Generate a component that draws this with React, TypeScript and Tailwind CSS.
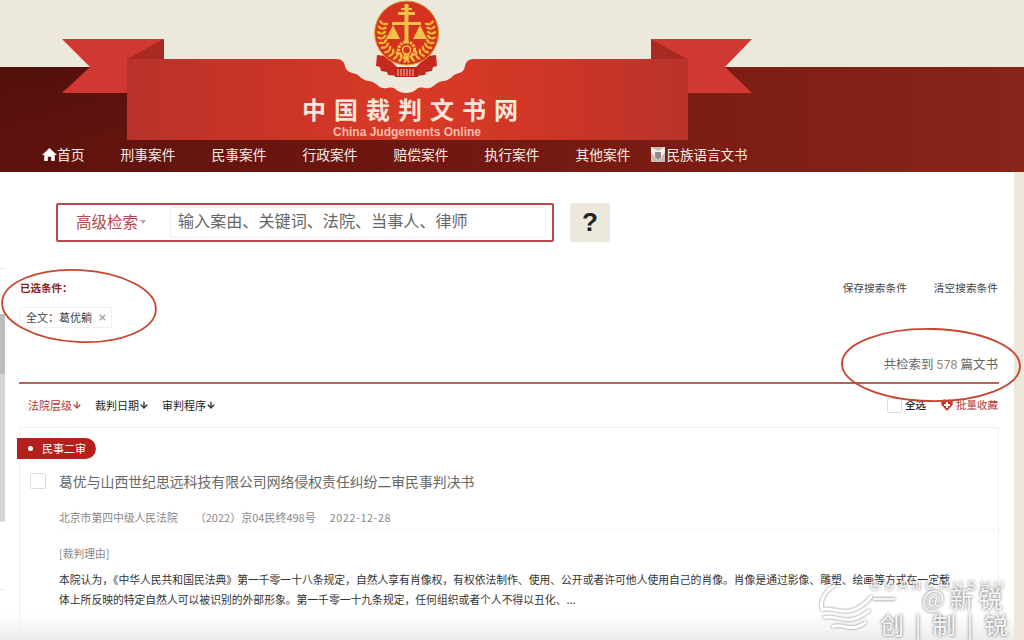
import { ArrowDown, X } from "lucide-react";

const navItems = ["刑事案件", "民事案件", "行政案件", "赔偿案件", "执行案件", "其他案件"];

function wheat(side: number) {
  const grains = [];
  for (let i = 0; i < 11; i++) {
    const a = (-20 + i * 11) * (Math.PI / 180);
    const x = 406.6 - side * 25 * Math.cos(a);
    const y = 33 + 25 * Math.sin(a);
    const rot = side * ((-20 + i * 11) * -1 + 0);
    grains.push(
      <g key={i} transform={`translate(${x} ${y}) rotate(${rot})`}>
        <ellipse cx="-2.6" cy="0" rx="2.8" ry="1.3" fill="#f2b632" transform="rotate(28)" />
        <ellipse cx="2.6" cy="0" rx="2.8" ry="1.3" fill="#f2b632" transform="rotate(-28)" />
      </g>,
    );
  }
  return grains;
}

function Banner() {
  return (
    <svg className="absolute inset-0" width="1024" height="172" viewBox="0 0 1024 172">
      <defs>
        <linearGradient id="band" x1="0" x2="1" y1="0" y2="0">
          <stop offset="0" stopColor="#5d120d" />
          <stop offset="0.35" stopColor="#6d1610" />
          <stop offset="0.75" stopColor="#7e1f15" />
          <stop offset="1" stopColor="#882419" />
        </linearGradient>
        <linearGradient id="bandTop" x1="0" x2="0" y1="0" y2="1">
          <stop offset="0" stopColor="#000" stopOpacity="0.12" />
          <stop offset="1" stopColor="#000" stopOpacity="0" />
        </linearGradient>
        <linearGradient id="ribbon" x1="0" x2="1" y1="0" y2="0">
          <stop offset="0" stopColor="#b9322a" />
          <stop offset="0.3" stopColor="#cc3526" />
          <stop offset="0.5" stopColor="#d93a27" />
          <stop offset="0.72" stopColor="#d03626" />
          <stop offset="1" stopColor="#b9332a" />
        </linearGradient>
      </defs>
      <rect y="0" width="1024" height="67" fill="#ede8dc" />
      <rect y="67" width="1024" height="105" fill="url(#band)" />
      <rect y="67" width="400" height="73" fill="url(#bandTop)" />
      <polygon points="62,39 164,39 164,93 62,93 90,67" fill="#d23832" />
      <polygon points="127,59 164,39 164,59" fill="#a82a22" />
      <polygon points="752,39 651,39 651,93 752,93 725,67" fill="#d23832" />
      <polygon points="651,39 687,59 651,59" fill="#a82a22" />
      <rect x="335" y="55" width="144" height="42" fill="#ede8dc" />
      <path
        d="M127 59 H336 C342 59 344 62 345 66 C346 72 352 73 356 74 C360 76 362 80 368 81 C373 81 376 84 380 87 C384 90 390 86 394 88 C398 92 402 93 406 93 C410 93 414 92 418 88 C422 86 428 90 432 87 C436 84 439 81 444 81 C450 80 452 76 456 74 C460 73 464 72 465 66 C466 62 468 59 474 59 H688 V140 H127 Z"
        fill="url(#ribbon)"
      />
      <path d="M377 55 L386 56 L397 67 L397 76 L388 75 L387 72 L381 71 L380 67 L376 66 Z" fill="#c52a20" />
      <path d="M436 55 L427 56 L416 67 L416 76 L425 75 L426 72 L432 71 L433 67 L437 66 Z" fill="#c52a20" />
      <rect x="395" y="67" width="23" height="10" fill="#b9261d" />
      <path d="M398 69 V76 M401 69 V76 M404 69 V76 M407 69 V76 M410 69 V76 M413 69 V76" stroke="#eec9a0" strokeWidth="1" />
      <circle cx="406.6" cy="33" r="32" fill="#d4331f" stroke="#e4a52f" strokeWidth="1" />
      {wheat(1)}
      {wheat(-1)}
      <path d="M404.5 4 H408.5 V43 H404.5 Z M398 12 H415 V15 H398 Z M401 8 H412 V10 H401 Z M392 22 H421 V25 H392 Z" fill="#f4c04a" />
      <path d="M393 25 L386 39 H400 Z M420 25 L413 39 H427 Z" fill="#f4c04a" />
      <circle cx="406.6" cy="50" r="8" fill="none" stroke="#f4c04a" strokeWidth="3" strokeDasharray="2.4 1" />
      <circle cx="406.6" cy="50" r="4" fill="none" stroke="#f4c04a" strokeWidth="1.6" />
    </svg>
  );
}

function Watermark() {
  return (
    <div className="absolute right-[10px] bottom-0 w-[194px] h-[62px] pointer-events-none text-white/90 [text-shadow:0_0_3px_#555]">
      <svg className="absolute left-0 top-[6px] drop-shadow-[0_0_1px_#777]" width="54" height="50" viewBox="0 0 54 50" fill="none" stroke="#fff" strokeWidth="3">
        <path d="M15 1 C3 8 -1 20 3 26" />
        <path d="M1 26 C14 20 28 40 52 12" />
        <path d="M3 34 C16 28 26 46 50 26" />
        <path d="M12 43 C24 38 30 50 46 38" />
      </svg>
      <div className="absolute left-[50px] top-0 text-[13px] leading-[15px] tracking-[4.5px] font-['Liberation_Sans',sans-serif] whitespace-nowrap">GUANCHUSHU</div>
      <div className="absolute left-[52px] top-[6px] text-[24px] leading-[28px] tracking-[5px] whitespace-pre">一  @新锐</div>
      <div className="absolute left-[60px] top-[32px] flex w-[128px] justify-between text-[24px] leading-[28px]">
        <span>创</span>
        <span>|</span>
        <span>制</span>
        <span>|</span>
        <span>锐</span>
      </div>
    </div>
  );
}

export default function App() {
  return (
    <div className="relative w-[1024px] h-[640px] overflow-hidden bg-white text-[#333] font-['Noto_Sans_CJK_SC','Liberation_Sans',sans-serif]">
      <header className="relative h-[172px]">
        <Banner />
        <div className="absolute left-[302px] top-[94px] w-[230px] text-[24px] leading-[30px] font-bold tracking-[8px] text-[#f8e4da] whitespace-nowrap">
          中国裁判文书网
        </div>
        <div className="absolute left-[333px] top-[125px] text-[12px] leading-[14px] font-bold text-[#f2bdac] font-['Liberation_Sans',sans-serif]">
          China Judgements Online
        </div>
        <nav className="absolute left-[42px] top-[137px] h-[34px] flex items-center gap-[36px] text-[13.75px] text-[#f7ebe6]">
          <span className="flex items-center">
            <svg width="15" height="15" viewBox="0 0 16 16" fill="#fff">
              <path d="M8 1 L16 8.5 H13.6 V15 H9.8 V10.5 H6.2 V15 H2.4 V8.5 H0 Z" />
            </svg>
            首页
          </span>
          {navItems.map((item) => (
            <span key={item}>{item}</span>
          ))}
          <span className="flex items-center -ml-[16px] gap-[2px] text-[13.5px]">
            <svg width="14" height="15" viewBox="0 0 14 15">
              <rect width="14" height="15" fill="#c9b9b5" />
              <path d="M0 0 L7 4 L14 0 V5 L7 14 L0 5 Z" fill="#f4efee" />
              <path d="M4 5 H10 V10 L7 13 L4 10 Z" fill="#8f8a88" />
            </svg>
            民族语言文书
          </span>
        </nav>
      </header>

      <div className="flex h-[468px]">
        <div className="w-[5px] pt-[96px] flex flex-col">
          <div className="border-t border-[#e6e6e6] h-[46px]" />
          <div className="h-[60px] bg-[#bdbdbd]" />
          <div className="h-[147px] bg-[#d4d4d4]" />
          <div className="border-t border-[#e6e6e6] h-[68px]" />
          <div className="border-t border-[#e6e6e6]" />
        </div>

        <main className="flex-1 pl-[14px] pr-[15px]">
          <div className="flex items-center gap-[16px] mt-[31px] ml-[37px]">
            <div className="w-[498px] h-[39px] rounded-[2px] border-2 border-[#b9494a] flex items-center">
              <span className="w-[90px] pl-[18px] pb-[2px] text-[15.5px] text-[#b5474a] flex items-center whitespace-nowrap">
                高级检索
                <span className="ml-[2px] border-x-[3px] border-t-[4px] border-x-transparent border-t-[#aaa]" />
              </span>
              <span className="ml-[22px] w-[376px] h-[31px] rounded-[2px] border border-[#eee] pl-[7px] text-[16.1px] leading-[25px] text-[#666]">
                输入案由、关键词、法院、当事人、律师
              </span>
            </div>
            <div className="w-[40px] h-[39px] rounded-[3px] bg-[#ede8dc] flex items-center justify-center text-[26px] font-bold text-[#222] font-['Liberation_Sans',sans-serif]">
              ?
            </div>
          </div>

          <div className="flex justify-between items-center mt-[38px] text-[10.7px] leading-[16px]">
            <span className="ml-px text-[#8f2019] text-[10.5px] font-bold">已选条件：</span>
            <div className="flex gap-[27px] text-[#444] pr-px">
              <span>保存搜索条件</span>
              <span>清空搜索条件</span>
            </div>
          </div>

          <div className="mt-[11px] w-[93px] h-[21px] border border-[#f0f0f0] flex items-center pl-[6px] gap-[6px] text-[11px] text-[#444]">
            全文：葛优躺
            <X size={9} strokeWidth={4.5} className="text-[#aaa]" />
          </div>

          <div className="mt-[27px] text-right text-[12.5px] leading-[18px] text-[#666] pr-px">
            共检索到 <span className="text-[#a08a6e] font-['Inter',sans-serif] text-[12px]">578</span> 篇文书
          </div>
          <div className="mt-[8px] h-[2px] bg-[#b4625c]" />

          <div className="flex justify-between items-center h-[42px] text-[11px] pl-[9px]">
            <div className="flex gap-[14px]">
              <span className="flex items-center text-[#b5383a]">
                法院层级
                <ArrowDown size={10} strokeWidth={3} className="-mr-px" />
              </span>
              <span className="flex items-center text-[#222]">
                裁判日期
                <ArrowDown size={10} strokeWidth={3} className="-mr-px" />
              </span>
              <span className="flex items-center text-[#222]">
                审判程序
                <ArrowDown size={10} strokeWidth={3} className="-mr-px" />
              </span>
            </div>
            <div className="flex items-center pr-px text-[10.5px]">
              <span className="w-[15px] h-[15px] border border-[#ddd] rounded-[2px]" />
              <span className="ml-[3px] font-medium text-[#222]">全选</span>
              <svg className="ml-[15px]" width="12" height="12" viewBox="0 0 12 12">
                <path d="M6 12 L0.6 6 C-0.6 3 1 0.5 3.4 0.5 C4.6 0.5 5.4 1 6 2 C6.6 1 7.4 0.5 8.6 0.5 C11 0.5 12.6 3 11.4 6 Z" fill="#c9332f" />
                <path d="M5 3 H7 V5 H9 V7 H7 V9 H5 V7 H3 V5 H5 Z" fill="#fff" />
              </svg>
              <span className="ml-[3px] text-[#b5383a]">批量收藏</span>
            </div>
          </div>

          <article className="mt-px border-l border-r border-t border-[#f1f1f1] h-[214px] pt-[10px]">
            <div className="-ml-[3px] w-[79px] h-[21px] rounded-r-full bg-[#b5201c] text-white text-[11px] flex items-center pl-[11px] gap-[9px]">
              <span className="w-[5px] h-[5px] rounded-full bg-white" />
              民事二审
            </div>
            <div className="flex items-center pl-[10px] mt-[12px] h-[20px]">
              <span className="w-[16px] h-[16px] border border-[#ddd] rounded-[2px]" />
              <span className="ml-[13px] text-[13.85px] text-[#666] whitespace-nowrap">
                葛优与山西世纪思远科技有限公司网络侵权责任纠纷二审民事判决书
              </span>
            </div>
            <div className="ml-[39px] mt-[18px] h-[21px] flex items-start text-[10.8px] leading-[16px] text-[#888] border-b border-[#f7f7f7]">
              <span>北京市第四中级人民法院</span>
              <span className="ml-[17px] text-[11px]">（2022）京04民终498号</span>
              <span className="ml-[14px] tracking-[0.6px]">2022-12-28</span>
            </div>
            <div className="ml-[39px] mt-[15px] text-[10.8px] leading-[16px] text-[#888]">[裁判理由]</div>
            <p className="ml-[39px] mt-[8px] text-[10.8px] leading-[20px] text-[#333] whitespace-nowrap">
              本院认为，《中华人民共和国民法典》第一千零一十八条规定，自然人享有肖像权，有权依法制作、使用、公开或者许可他人使用自己的肖像。肖像是通过影像、雕塑、绘画等方式在一定载
              <br />
              体上所反映的特定自然人可以被识别的外部形象。第一千零一十九条规定，任何组织或者个人不得以丑化、...
            </p>
          </article>
        </main>

        <div className="w-[10px] bg-[#ede8dc]" />
      </div>

      <svg className="absolute left-0 top-[265px] pointer-events-none" width="1024" height="145" viewBox="0 265 1024 145" fill="none" stroke="#c8452e" strokeWidth="1.8">
        <ellipse cx="79" cy="306" rx="77" ry="36" transform="rotate(3 79 306)" />
        <ellipse cx="931" cy="365" rx="89" ry="36" transform="rotate(1 931 365)" />
      </svg>

      <div className="absolute left-0 right-[10px] bottom-0 h-[26px] bg-gradient-to-b from-transparent to-[#ececec] pointer-events-none" />
      <Watermark />
    </div>
  );
}
